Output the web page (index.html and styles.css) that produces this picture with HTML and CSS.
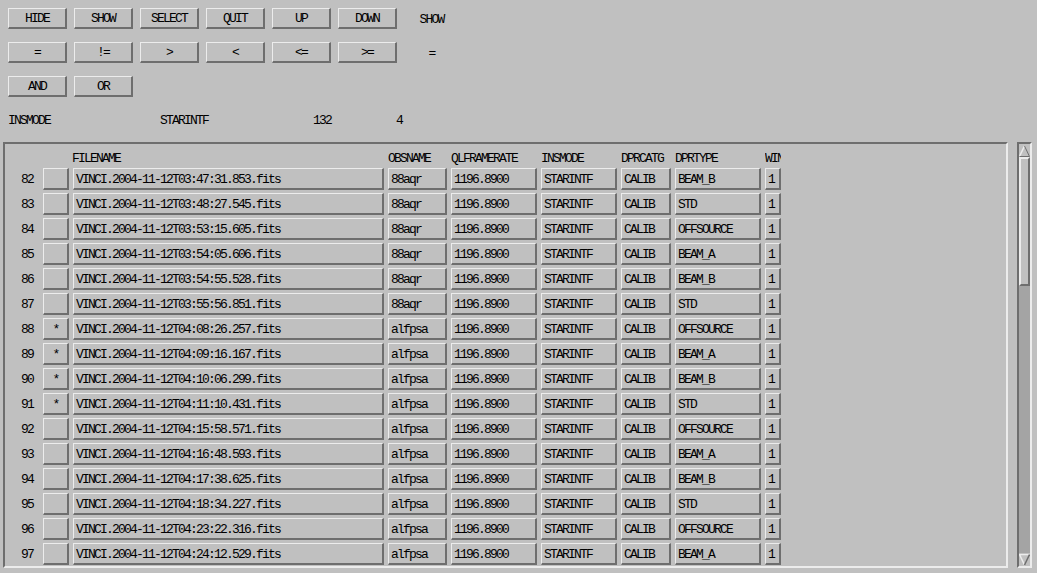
FILE: index.html
```html
<!DOCTYPE html>
<html lang="en">
<head>
  <meta charset="UTF-8" />
  <title>File Selector</title>
  <link rel="stylesheet" href="styles.css">
</head>
<body>
  <div class="controls">
    <div class="btn-row">
      <button class="btn">HIDE</button>
      <button class="btn">SHOW</button>
      <button class="btn">SELECT</button>
      <button class="btn">QUIT</button>
      <button class="btn">UP</button>
      <button class="btn">DOWN</button>
      <span class="state">SHOW</span>
    </div>
    <div class="btn-row">
      <button class="btn">=</button>
      <button class="btn">!=</button>
      <button class="btn">&gt;</button>
      <button class="btn">&lt;</button>
      <button class="btn">&lt;=</button>
      <button class="btn">&gt;=</button>
      <span class="state">=</span>
    </div>
    <div class="btn-row">
      <button class="btn">AND</button>
      <button class="btn">OR</button>
    </div>
    <div class="info">
      <span class="info-key">INSMODE</span>
      <span class="info-val">STARINTF</span>
      <span class="info-count">132</span>
      <span>4</span>
    </div>
  </div>

  <div class="pane">
    <div class="frame">
      <div class="grid head">
        <span></span>
        <span></span>
        <span>FILENAME</span>
        <span>OBSNAME</span>
        <span>QLFRAMERATE</span>
        <span>INSMODE</span>
        <span>DPRCATG</span>
        <span>DPRTYPE</span>
        <span class="clip">WIN</span>
      </div>
      <div id="rows"></div>
    </div>
    <div class="scrollbar">
      <div class="arrow">
        <svg width="11" height="12" viewBox="0 0 11 12">
          <polygon points="5.5,1 10.5,11.5 0.5,11.5" fill="#c0c0c0" />
          <polyline points="0.5,11.5 5.5,1" fill="none" stroke="#ececec" stroke-width="1.5" />
          <polyline points="5.5,1 10.5,11.5 0.5,11.5" fill="none" stroke="#6e6e6e" stroke-width="1" />
        </svg>
      </div>
      <div class="thumb"></div>
      <div class="trough"></div>
      <div class="arrow">
        <svg width="11" height="12" viewBox="0 0 11 12">
          <polygon points="0.5,0.5 10.5,0.5 5.5,11" fill="#c0c0c0" />
          <polyline points="5.5,11 0.5,0.5 10.5,0.5" fill="none" stroke="#ececec" stroke-width="1.5" />
          <polyline points="10.5,0.5 5.5,11" fill="none" stroke="#6e6e6e" stroke-width="1.5" />
        </svg>
      </div>
    </div>
  </div>

  <script>
    // number, selected, file time, object, dpr type
    const files = [
      [82, false, '03:47:31.853', '88aqr', 'BEAM_B'],
      [83, false, '03:48:27.545', '88aqr', 'STD'],
      [84, false, '03:53:15.605', '88aqr', 'OFFSOURCE'],
      [85, false, '03:54:05.606', '88aqr', 'BEAM_A'],
      [86, false, '03:54:55.528', '88aqr', 'BEAM_B'],
      [87, false, '03:55:56.851', '88aqr', 'STD'],
      [88, true, '04:08:26.257', 'alfpsa', 'OFFSOURCE'],
      [89, true, '04:09:16.167', 'alfpsa', 'BEAM_A'],
      [90, true, '04:10:06.299', 'alfpsa', 'BEAM_B'],
      [91, true, '04:11:10.431', 'alfpsa', 'STD'],
      [92, false, '04:15:58.571', 'alfpsa', 'OFFSOURCE'],
      [93, false, '04:16:48.593', 'alfpsa', 'BEAM_A'],
      [94, false, '04:17:38.625', 'alfpsa', 'BEAM_B'],
      [95, false, '04:18:34.227', 'alfpsa', 'STD'],
      [96, false, '04:23:22.316', 'alfpsa', 'OFFSOURCE'],
      [97, false, '04:24:12.529', 'alfpsa', 'BEAM_A']
    ];

    const rows = document.getElementById('rows');
    for (const [num, sel, time, obj, type] of files) {
      const row = document.createElement('div');
      row.className = 'grid row';
      row.innerHTML = `
        <span class="num">${num}</span>
        <span class="field mark">${sel ? '*' : ''}</span>
        <span class="field">VINCI.2004-11-12T${time}.fits</span>
        <span class="field">${obj}</span>
        <span class="field">1196.8900</span>
        <span class="field">STARINTF</span>
        <span class="field">CALIB</span>
        <span class="field">${type}</span>
        <span class="field">1</span>
      `;
      rows.appendChild(row);
    }
  </script>
</body>
</html>
```

FILE: styles.css
```css
body {
  margin: 0;
  background-color: #c0c0c0;
  color: #000;
  font-family: "Liberation Mono", "DejaVu Sans Mono", monospace;
  font-size: 13px;
  letter-spacing: -1.8px;
  overflow: hidden;
}
.controls {
  padding: 8px 8px 0;
}
.btn-row {
  display: flex;
  align-items: center;
  gap: 7px;
  height: 21px;
  margin-bottom: 13px;
}
.btn {
  width: 59px;
  height: 21px;
  padding: 1px 0 0;
  font: inherit;
  letter-spacing: inherit;
  color: #000;
  background-color: #c0c0c0;
  border: 2px solid;
  border-color: #ececec #6e6e6e #6e6e6e #ececec;
  border-top-width: 1px;
  border-left-width: 1px;
}
.state {
  width: 59px;
  margin-left: -2px;
  padding-top: 1px;
  text-align: center;
}
.info {
  display: flex;
  line-height: 14px;
  margin-top: 17px;
  margin-bottom: 14px;
}
.info-key {
  width: 152px;
}
.info-val {
  width: 153px;
}
.info-count {
  width: 83px;
}
.pane {
  display: flex;
  gap: 8px;
  height: 426px;
  padding-left: 3px;
}
.frame {
  box-sizing: border-box;
  width: 1005px;
  border: 2px solid;
  border-color: #6e6e6e #ececec #ececec #6e6e6e;
  overflow: hidden;
}
.grid {
  display: grid;
  grid-template-columns: 34px 26px 311px 59px 86px 76px 50px 86px 16px;
  column-gap: 4px;
  white-space: nowrap;
}
.head {
  line-height: 14px;
  padding: 8px 0 2px;
}
.head .clip {
  overflow: hidden;
}
.head span:nth-child(3) {
  margin-left: -1px;
}
.row {
  height: 22px;
  margin-bottom: 3px;
}
.num {
  line-height: 22px;
  padding-top: 1px;
  text-align: right;
  padding-right: 6px;
}
.field {
  box-sizing: border-box;
  height: 22px;
  line-height: 17px;
  padding-left: 2px;
  overflow: hidden;
  border: 2px solid;
  border-color: #ececec #6e6e6e #6e6e6e #ececec;
  border-top-width: 1px;
  border-left-width: 1px;
  padding-top: 2px;
}
.mark {
  text-align: center;
  padding-left: 0;
}
.scrollbar {
  box-sizing: border-box;
  width: 15px;
  margin-left: 1px;
  display: flex;
  flex-direction: column;
  border: 2px solid;
  border-color: #6e6e6e #ececec #ececec #6e6e6e;
  background-color: #a4a4a4;
}
.arrow {
  height: 13px;
  background-color: #c0c0c0;
  display: flex;
  justify-content: center;
  align-items: center;
}
.thumb {
  height: 129px;
  box-sizing: border-box;
  background-color: #c0c0c0;
  border: 2px solid;
  border-color: #ececec #6e6e6e #6e6e6e #ececec;
}
.trough {
  flex: 1;
}
```
